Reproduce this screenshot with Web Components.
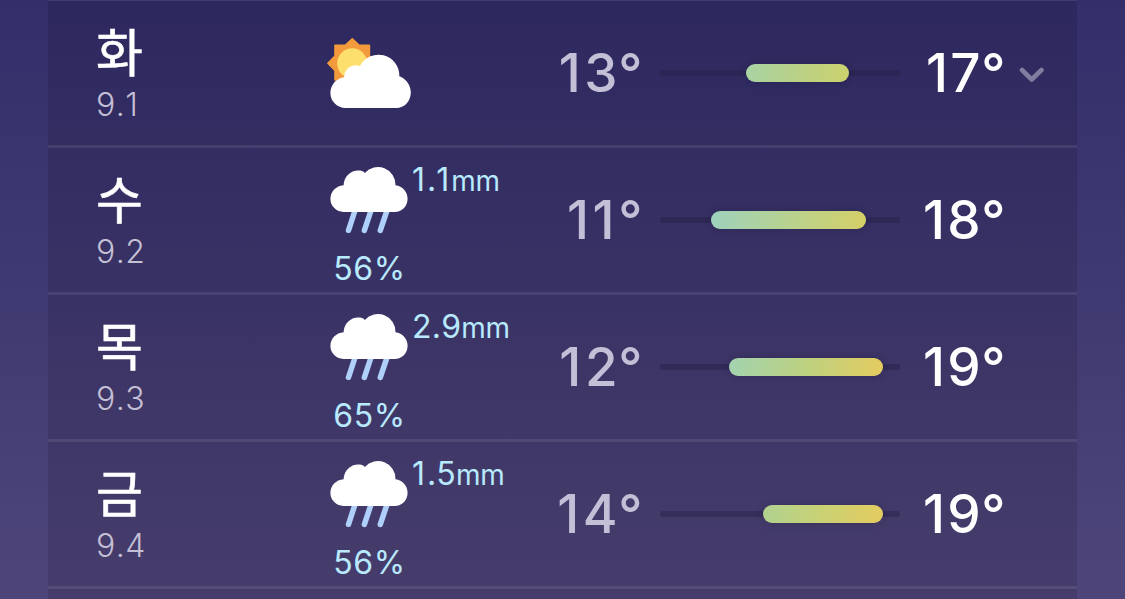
<!DOCTYPE html>
<html lang="ko">
<head>
<meta charset="utf-8">
<title>주간 예보</title>
<style>
html,body{margin:0;height:100%;overflow:hidden}
body{font-family:Inter,"Noto Sans CJK KR",sans-serif;background:linear-gradient(#332f6a,#3d3870 42%,#4e467b)}
</style>
</head>
<body>
<forecast-list>
  <forecast-day day="화" date="9.1" sky="partly" low="13" high="17" open></forecast-day>
  <forecast-day day="수" date="9.2" sky="rain" amount="1.1" chance="56" low="11" high="18"></forecast-day>
  <forecast-day day="목" date="9.3" sky="rain" amount="2.9" chance="65" low="12" high="19"></forecast-day>
  <forecast-day day="금" date="9.4" sky="rain" amount="1.5" chance="56" low="14" high="19"></forecast-day>
</forecast-list>
<script>
customElements.define('forecast-list', class extends HTMLElement {
  constructor() {
    super();
    this.attachShadow({mode: 'open'}).innerHTML = `
      <style>
        :host{display:block;box-sizing:border-box;height:599px;margin:0 48px;overflow:hidden;
          border-top:1px solid #423d70;
          background:linear-gradient(#2d285f,#352f63 35%,#3f3767 70%,#463d6c)}
      </style><slot></slot>`;
  }
});

customElements.define('weather-icon', class extends HTMLElement {
  constructor() { super(); this.attachShadow({mode: 'open'}); }
  connectedCallback() {
    const partly = `
      <svg width="84" height="70" viewBox="0 0 84 70">
        <path fill="#f29a3c" stroke="#f29a3c" stroke-width="1.6" stroke-linejoin="round"
          d="M25.3 .9 32 7.2H42.4V18L49.5 25.3 42.4 32.5V42H8V32.5L.9 25.3 8 18V7.2H18.5Z"/>
        <circle cx="25.2" cy="25.3" r="15" fill="#fddf6d"/>
        <path fill="#fff" d="M18.5 70A15.1 15.1 0 0 1 3.4 54.9C3.4 46.8 9.4 40 17.2 39.2C16.8 31.5 25.5 24.9 32.9 28.2A20.8 20.8 0 0 1 72.3 38.2C79 40.5 83.8 47.3 83.8 54.4C83.8 63 77.6 70 69.2 70Z"/>
      </svg>`;
    const rain = `
      <svg width="78" height="68" viewBox="0 0 78 68">
        <g stroke="#b0d0fc" stroke-width="5.5" stroke-linecap="round">
          <path d="M25.5 43 18.5 64.3M41.5 43 34.4 64.3M57.5 43 50.3 64.3"/>
        </g>
        <path fill="#fff" d="M13.5 46A13.3 13.3 0 0 1 .4 32.9C.4 25.8 6 19.6 13.6 19.2C14 9.5 22.6 2.6 32 5Q34 5.4 34.8 6.9A17.6 17.6 0 0 1 65.5 19.2C72.5 19.8 77.6 25.8 77.6 32.8C77.6 40.2 72 46 64.6 46Z"/>
      </svg>`;
    this.shadowRoot.innerHTML = `<style>:host,svg{display:block}svg{overflow:visible}</style>` +
      (this.getAttribute('sky') === 'rain' ? rain : partly);
  }
});

customElements.define('temp-range', class extends HTMLElement {
  constructor() { super(); this.attachShadow({mode: 'open'}); }
  connectedCallback() {
    const low = +this.getAttribute('low'), high = +this.getAttribute('high');
    const shades = {11: '#9dd2bd', 12: '#a2d3b0', 13: '#a8d4a4', 14: '#b0d291', 17: '#ccd26c', 18: '#d5cf67', 19: '#e4cb5f'};
    const mid = {17: '#bad187', 18: '#b8d290', 19: low === 12 ? '#bdd180' : '#cad174'};
    this.shadowRoot.innerHTML = `
      <style>
        :host{display:flex;align-items:center;width:240px;height:18px}
        .track{flex:1;height:6px;border-radius:3px;background:rgba(35,31,70,.42);display:flex;align-items:center}
        .bar{flex:none;width:${(high - low) * 17.15 + 34.6}px;height:18px;border-radius:9px;
          margin-left:${(low - 8) * 17.15}px;
          background:linear-gradient(100deg,${shades[low]},${mid[high]} 50%,${shades[high]});
          box-shadow:0 0 7px rgba(25,22,45,.28)}
      </style><div class="track"><div class="bar"></div></div>`;
  }
});

customElements.define('forecast-day', class extends HTMLElement {
  constructor() { super(); this.attachShadow({mode: 'open'}); }
  connectedCallback() {
    const a = n => this.getAttribute(n);
    const wet = a('sky') === 'rain';
    // Inter's "1" is narrow, so it gets a little extra advance.
    const wide = s => s.replace(/1/g, '<i>1</i>');
    this.shadowRoot.innerHTML = `
      <style>
        :host{display:grid;box-sizing:border-box;height:147px;border-bottom:3px solid rgba(255,255,255,.085);
          grid-template-columns:230px 210px 104px 240px 104px 1fr;
          padding-left:48px;align-items:center;color:#fff;white-space:nowrap;font-kerning:none}
        i{font-style:normal;letter-spacing:.06em}
        .when{align-self:start;display:flex;flex-direction:column}
        .day{font:400 51px/60px "Noto Sans CJK KR",sans-serif;margin:19px 0 0;-webkit-text-stroke:.6px #fff}
        .date{font-size:32px;font-weight:350;line-height:36px;margin-top:7px;color:#c3bfd5;letter-spacing:.5px}
        .sky{align-self:start;display:grid;grid-template-columns:82px auto;color:#b8e9fd;font-size:32px;line-height:36px;
          padding-left:4px;padding-top:${wet ? 18 : 37}px}
        .sky.dry{padding-left:1px}
        .amount{margin-top:-4px;letter-spacing:.2px}
        .amount small{font-size:28px;letter-spacing:-.3px}
        .chance{grid-column:1;margin-top:17px;justify-self:center;margin-right:3px;letter-spacing:.6px}
        .temp{font-size:53px;line-height:60px;text-align:right;font-weight:450;letter-spacing:.6px}
        .low{color:#c3bfd6;margin-right:-3px}
        .high{font-weight:500;margin-right:-22px}
        .low i{letter-spacing:3.6px}
        .high i{letter-spacing:2.2px}
        temp-range{margin-left:20px}
        .more{margin:3px 0 0 35px;display:block}
      </style>
      <div class="when"><span class="day">${a('day')}</span><span class="date">${a('date')}</span></div>
      <div class="sky ${wet ? '' : 'dry'}">
        <weather-icon sky="${a('sky')}"></weather-icon>
        ${wet ? `<span class="amount">${wide(a('amount'))}<small>mm</small></span><span class="chance">${a('chance')}%</span>` : ''}
      </div>
      <span class="temp low">${wide(a('low'))}°</span>
      <temp-range low="${a('low')}" high="${a('high')}"></temp-range>
      <span class="temp high">${wide(a('high'))}°</span>
      ${this.hasAttribute('open') ? `<svg class="more" width="26" height="18" viewBox="0 0 26 18"><path d="M3 4 12.7 13.5 22.5 4" fill="none" stroke="#817d9f" stroke-width="4.6" stroke-linecap="round" stroke-linejoin="round"/></svg>` : ''}`;
  }
});
</script>
</body>
</html>
